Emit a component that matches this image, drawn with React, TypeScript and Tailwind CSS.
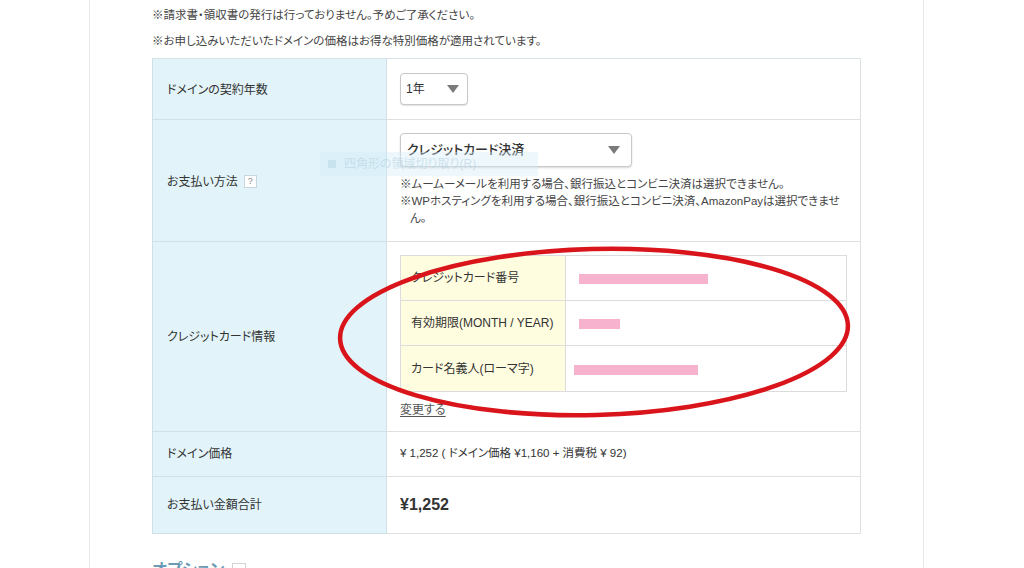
import React from 'react';

const Caret = () => (
  <svg width="12" height="8" viewBox="0 0 12 8">
    <path d="M0 0h12L6 8z" fill="#7a7a7a" />
  </svg>
);

const Redact = ({ w, ml = 0 }: { w: number; ml?: number }) => (
  <div className="h-[10px] bg-[#f7b2cd]" style={{ width: w, marginLeft: ml }} />
);

export default function App() {
  return (
    <div className="relative w-[1024px] h-[568px] overflow-hidden bg-white text-[#333] [font-family:'Liberation_Sans','Noto_Sans_CJK_JP',sans-serif] [font-feature-settings:'palt']">
      <div className="ml-[89px] w-[835px] h-full border-x border-[#e8e8e8] pl-[62px]">
        <p className="pt-[6px] text-[11.5px] leading-[18px] text-[#444]">※請求書・領収書の発行は行っておりません。予めご了承ください。</p>
        <p className="mt-[8px] text-[11.5px] leading-[18px] text-[#444]">※お申し込みいただいたドメインの価格はお得な特別価格が適用されています。</p>

        <div className="mt-[8px] w-[709px] border-t border-[#d5e3e8]">
          {/* 契約年数 */}
          <div className="flex h-[61px]">
            <div className="w-[235px] shrink-0 flex items-center pl-[14px] pt-[2px] bg-[#e2f4f9] border-l border-r border-b border-[#cfe1e7] text-[12px]">ドメインの契約年数</div>
            <div className="flex-1 flex items-center pl-[13px] border-r border-b border-[#e0e0e0]">
              <div className="w-[68px] h-[32px] flex items-center justify-between pl-[5px] pr-[8px] rounded-[4px] border border-[#c8c8c8] bg-white shadow-[0_1px_1px_rgba(0,0,0,0.12)] text-[12px]">
                <span>1年</span>
                <Caret />
              </div>
            </div>
          </div>

          {/* お支払い方法 */}
          <div className="flex h-[122px]">
            <div className="w-[235px] shrink-0 flex items-center pl-[14px] bg-[#e2f4f9] border-l border-r border-b border-[#cfe1e7] text-[12px]">
              <span className="mt-[2px]">お支払い方法</span>
              <span className="ml-[6px] mt-[2px] w-[13px] h-[13px] flex items-center justify-center border border-[#c9d7dc] bg-white text-[9px] leading-none text-[#888]">?</span>
            </div>
            <div className="flex-1 pl-[13px] pt-[13px] border-r border-b border-[#e0e0e0]">
              <div className="w-[232px] h-[34px] flex items-center justify-between pl-[6px] pr-[11px] rounded-[4px] border border-[#c8c8c8] bg-white shadow-[0_1px_2px_rgba(0,0,0,0.15)] text-[13px] font-medium">
                <span>クレジットカード決済</span>
                <Caret />
              </div>
              <div className="mt-[9px] text-[11.5px] leading-[17px] text-[#444] whitespace-nowrap">
                <p>※ムームーメールを利用する場合、銀行振込とコンビニ決済は選択できません。</p>
                <p>※WPホスティングを利用する場合、銀行振込とコンビニ決済、AmazonPayは選択できませ</p>
                <p className="pl-[10px]">ん。</p>
              </div>
            </div>
          </div>

          {/* クレジットカード情報 */}
          <div className="flex h-[190px]">
            <div className="w-[235px] shrink-0 flex items-center pl-[14px] bg-[#e2f4f9] border-l border-r border-b border-[#cfe1e7] text-[12px]">クレジットカード情報</div>
            <div className="flex-1 pl-[13px] pt-[13px] border-r border-b border-[#e0e0e0]">
              <div className="w-[447px] border border-[#dcdcdc] text-[12px]">
                <div className="flex h-[45px] border-b border-[#dcdcdc]">
                  <div className="w-[165px] shrink-0 flex items-center pl-[10px] bg-[#fffde0] border-r border-[#dcdcdc]">クレジットカード番号</div>
                  <div className="flex-1 flex items-center pl-[13px] pt-[2px]"><Redact w={129} /></div>
                </div>
                <div className="flex h-[45px] border-b border-[#dcdcdc]">
                  <div className="w-[165px] shrink-0 flex items-center pl-[10px] bg-[#fffde0] border-r border-[#dcdcdc]">有効期限(MONTH / YEAR)</div>
                  <div className="flex-1 flex items-center pl-[13px] pt-[2px]"><Redact w={41} /></div>
                </div>
                <div className="flex h-[45px]">
                  <div className="w-[165px] shrink-0 flex items-center pl-[10px] bg-[#fffde0] border-r border-[#dcdcdc]">カード名義人(ローマ字)</div>
                  <div className="flex-1 flex items-center pl-[8px] pt-[2px]"><Redact w={124} /></div>
                </div>
              </div>
              <a className="inline-block mt-[9px] text-[12px] text-[#555] underline underline-offset-2">変更する</a>
            </div>
          </div>

          {/* ドメイン価格 */}
          <div className="flex h-[45px]">
            <div className="w-[235px] shrink-0 flex items-center pl-[14px] bg-[#e2f4f9] border-l border-r border-b border-[#cfe1e7] text-[12px]">ドメイン価格</div>
            <div className="flex-1 flex items-center pl-[13px] border-r border-b border-[#e0e0e0] text-[11.5px]">
              ¥ 1,252 ( ドメイン価格 ¥1,160 + 消費税 ¥ 92)
            </div>
          </div>

          {/* お支払い金額合計 */}
          <div className="flex h-[57px]">
            <div className="w-[235px] shrink-0 flex items-center pl-[14px] bg-[#e2f4f9] border-l border-r border-b border-[#cfe1e7] text-[12px]">お支払い金額合計</div>
            <div className="flex-1 flex items-center pl-[13px] border-r border-b border-[#e0e0e0] text-[16px] font-bold">¥1,252</div>
          </div>
        </div>

        <div className="mt-[26px] flex items-center gap-[8px] text-[16px] leading-[20px] font-bold text-[#6a9ab4]">
          <span>オプション</span>
          <span className="w-[14px] h-[14px] border border-[#d4d4d4]" />
        </div>
      </div>

      {/* ghost tooltip left by the screen capture */}
      <div className="absolute left-[320px] top-[152px] w-[218px] h-[24px] flex items-center gap-[8px] pl-[8px] bg-[#d3ebf8]/40 text-[12px] text-[#b5d3e3]/60">
        <span className="w-[8px] h-[8px] bg-[#b5d3e3]/50" />
        <span>四角形の領域切り取り(R)</span>
      </div>

      {/* red hand-drawn ellipse */}
      <svg className="absolute inset-0 pointer-events-none" width="1024" height="568" viewBox="0 0 1024 568">
        <ellipse cx="594" cy="332" rx="254" ry="83" transform="rotate(-1.5 594 332)" fill="none" stroke="#d9141b" strokeWidth="4.5" />
      </svg>
    </div>
  );
}
